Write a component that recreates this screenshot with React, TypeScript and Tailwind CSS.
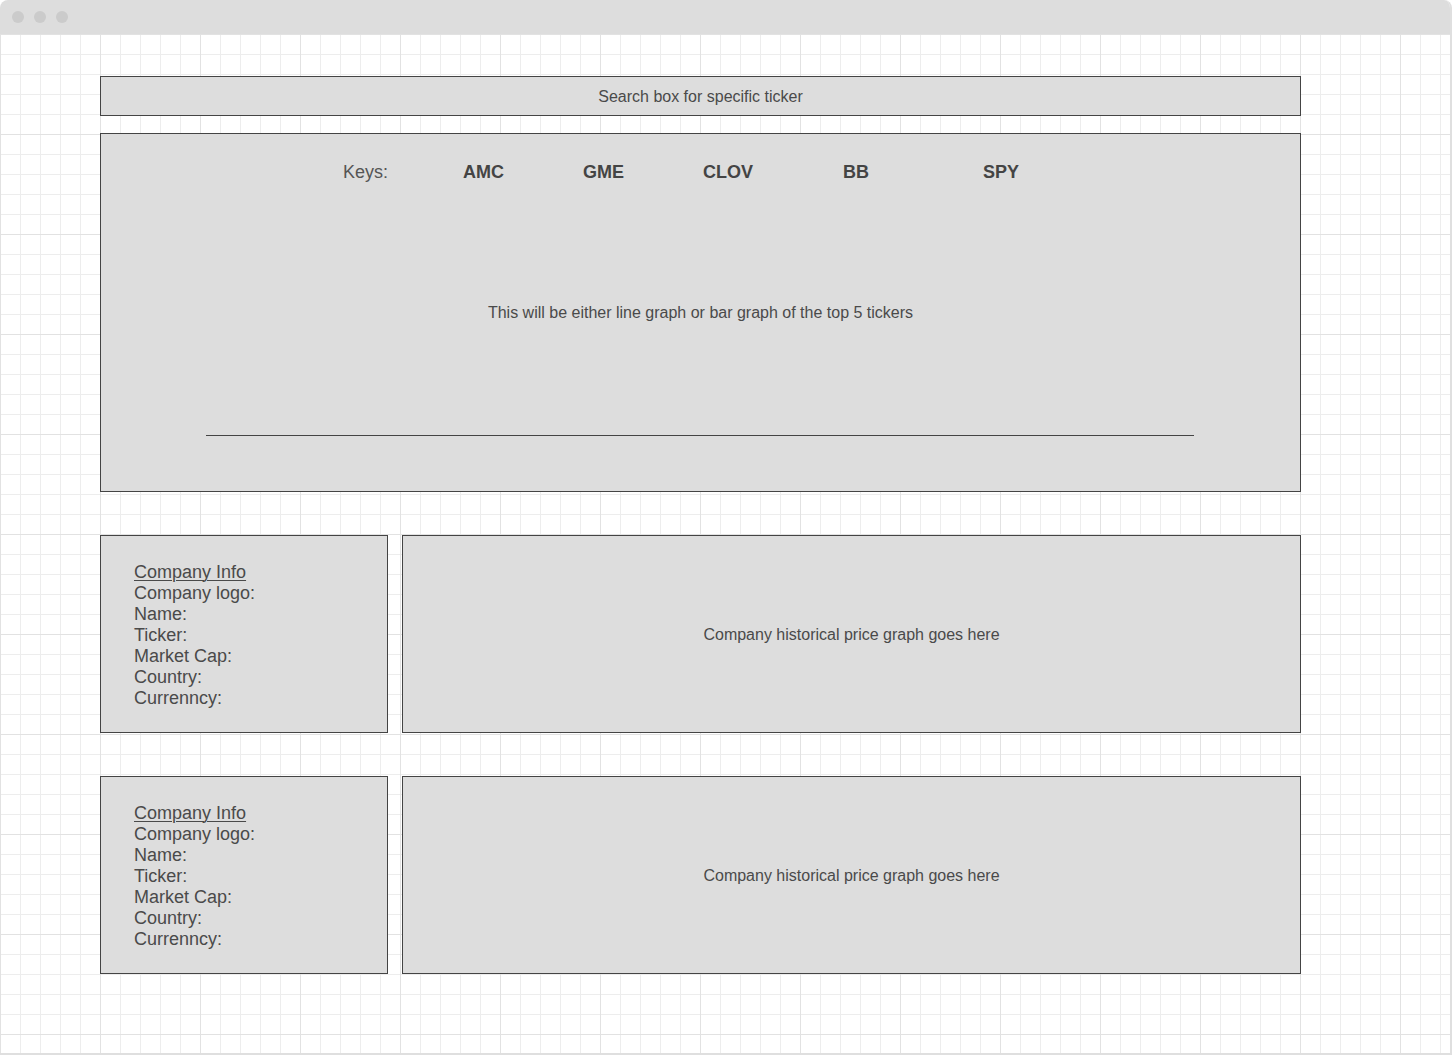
import React from "react";

const font = "font-['Liberation_Sans',Arial,sans-serif]";

function CompanyRow() {
  return (
    <div className="flex gap-[14px] h-[198px]">
      <div className="w-[288px] h-full bg-[#dddddd] border border-[#444444] flex flex-col justify-center pl-[33px] pt-[2px] text-[18px] leading-[21px] text-[#4a4a4a]">
        <span className="underline decoration-1 underline-offset-[2px]">Company Info</span>
        <span>Company logo:</span>
        <span>Name:</span>
        <span>Ticker:</span>
        <span>Market Cap:</span>
        <span>Country:</span>
        <span>Currenncy:</span>
      </div>
      <div className="w-[899px] h-full bg-[#dddddd] border border-[#444444] flex items-center justify-center pt-[2px] text-[16px] leading-[18px] text-[#4a4a4a]">
        Company historical price graph goes here
      </div>
    </div>
  );
}

export default function App() {
  return (
    <div className={`w-[1452px] h-[1055px] bg-white ${font}`}>
      <div className="w-[1452px] h-[1055px] rounded-t-[8px] overflow-hidden flex flex-col border-r-2 border-b-2 border-[#dfdfdf]">
        <div className="h-[34px] shrink-0 bg-[#dddddd] flex items-center gap-[10px] pl-[12px]">
          <span className="w-[12px] h-[12px] rounded-full bg-[#cbcbcb]" />
          <span className="w-[12px] h-[12px] rounded-full bg-[#cbcbcb]" />
          <span className="w-[12px] h-[12px] rounded-full bg-[#cbcbcb]" />
        </div>
        <div className="flex-1 bg-white bg-[image:linear-gradient(to_right,#e2e2e2_1px,transparent_1px),linear-gradient(to_bottom,#e2e2e2_1px,transparent_1px),linear-gradient(to_right,#ededed_1px,transparent_1px),linear-gradient(to_bottom,#ededed_1px,transparent_1px)] bg-[size:100px_100px,100px_100px,20px_20px,20px_20px] pl-[100px] pt-[42px]">
          <div className="w-[1201px] flex flex-col">
            <div className="h-[40px] bg-[#dddddd] border border-[#444444] flex items-center justify-center pt-[2px] text-[16px] leading-[18px] text-[#4a4a4a]">
              Search box for specific ticker
            </div>
            <div className="mt-[17px] h-[359px] bg-[#dddddd] border border-[#444444] flex flex-col pt-[28px]">
              <div className="flex pl-[242px] text-[18px] leading-[21px] text-[#444444]">
                <span className="w-[120px] text-[#555555]">Keys:</span>
                <span className="w-[120px] font-bold">AMC</span>
                <span className="w-[120px] font-bold">GME</span>
                <span className="w-[140px] font-bold">CLOV</span>
                <span className="w-[140px] font-bold">BB</span>
                <span className="font-bold">SPY</span>
              </div>
              <div className="mt-[121px] text-center text-[16px] leading-[18px] text-[#4a4a4a]">
                This will be either line graph or bar graph of the top 5 tickers
              </div>
              <div className="mt-[113px] ml-[105px] w-[988px] h-px bg-[#444444]" />
            </div>
            <div className="mt-[43px] flex flex-col gap-[43px]">
              <CompanyRow />
              <CompanyRow />
            </div>
          </div>
        </div>
      </div>
    </div>
  );
}
